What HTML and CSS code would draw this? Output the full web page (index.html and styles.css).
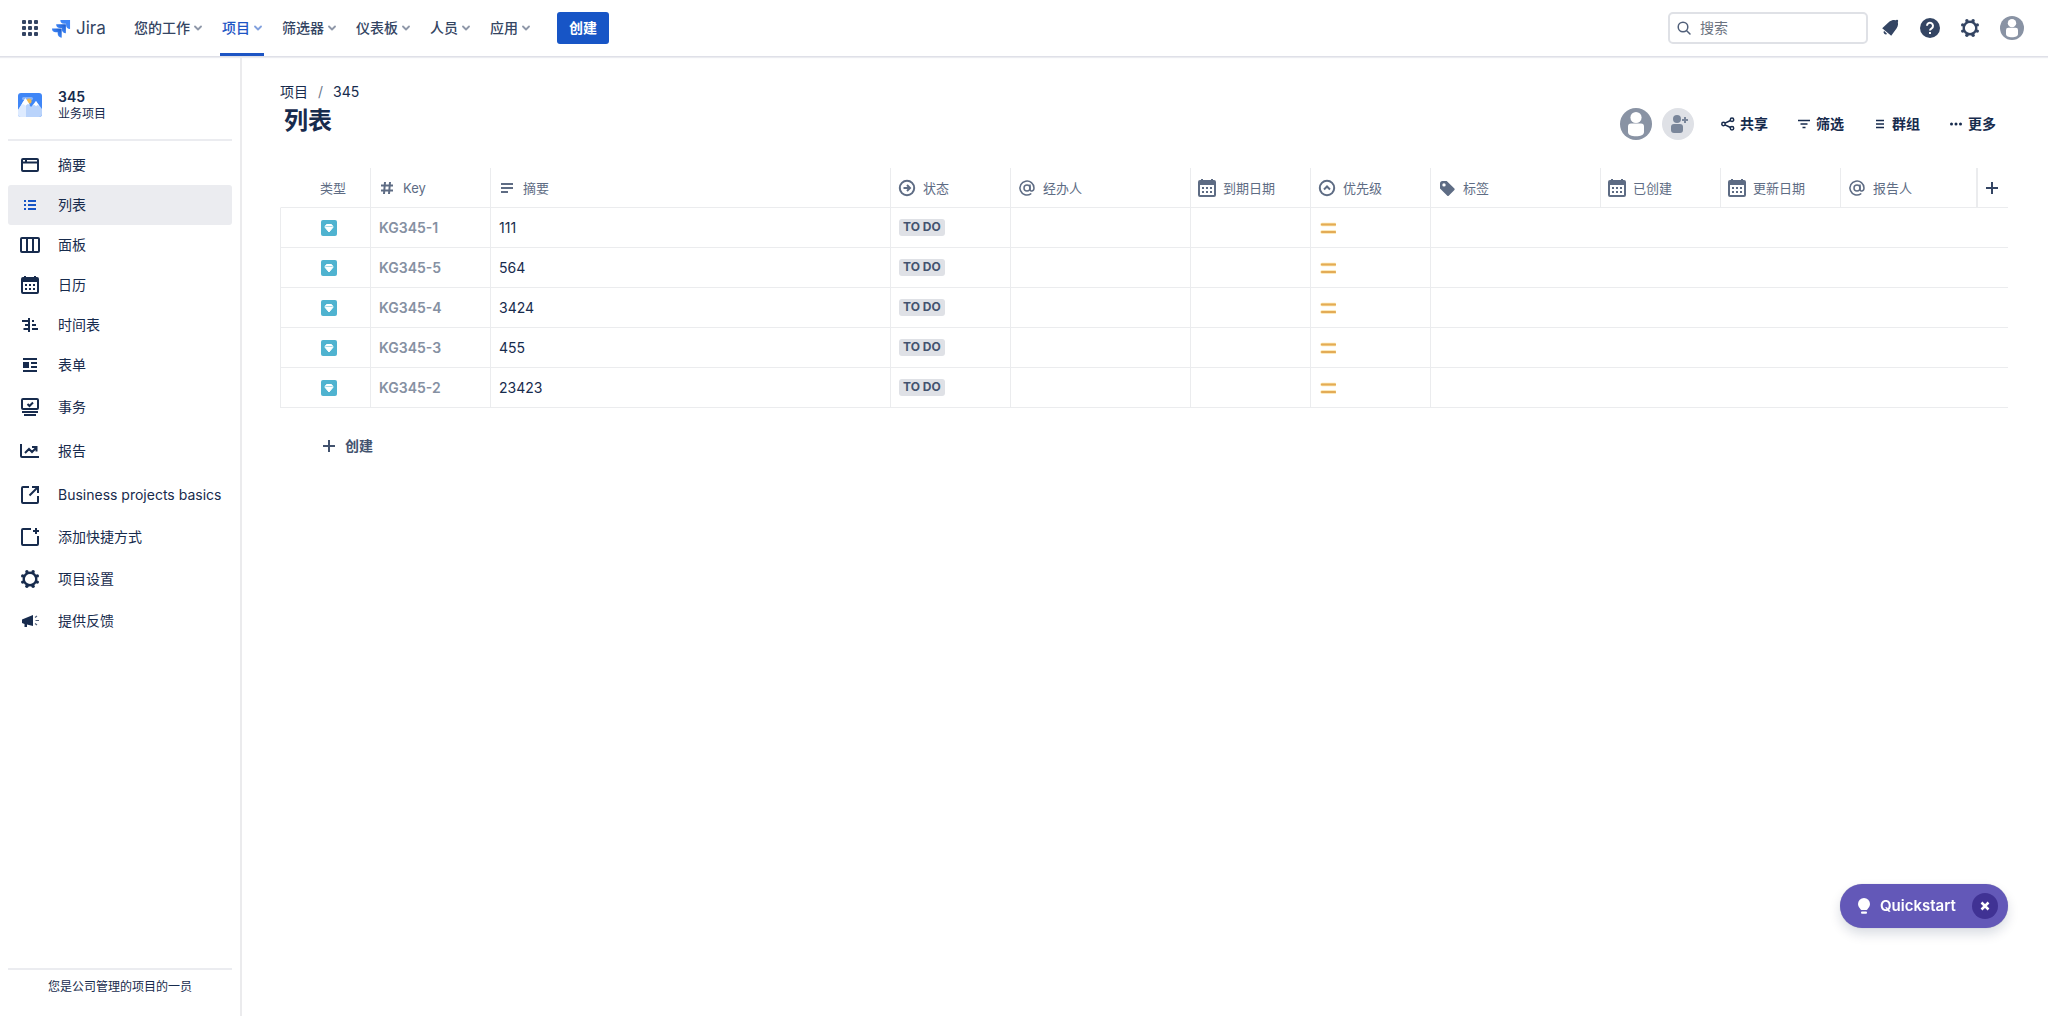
FILE: index.html
```html
<!DOCTYPE html>
<html lang="zh-CN">
<head>
<meta charset="utf-8">
<meta name="viewport" content="width=device-width, initial-scale=1">
<title>列表 - 345 - Jira</title>
<link rel="stylesheet" href="styles.css">
</head>
<body>
<svg class="sprite" aria-hidden="true">
  <symbol id="chevron" viewBox="0 0 8 8"><path d="M1 2.5 4 5.5 7 2.5" fill="none" stroke="currentColor" stroke-width="1.8" stroke-linecap="round" stroke-linejoin="round"/></symbol>
  <symbol id="gear" viewBox="0 0 24 24"><circle cx="12" cy="12" r="6.3" fill="none" stroke="currentColor" stroke-width="2.4"/><g fill="currentColor"><circle cx="15.1" cy="4.7" r="1.7"/><circle cx="19.3" cy="8.9" r="1.7"/><circle cx="19.3" cy="15.1" r="1.7"/><circle cx="15.1" cy="19.3" r="1.7"/><circle cx="8.9" cy="19.3" r="1.7"/><circle cx="4.7" cy="15.1" r="1.7"/><circle cx="4.7" cy="8.9" r="1.7"/><circle cx="8.9" cy="4.7" r="1.7"/></g></symbol>
  <symbol id="calendar" viewBox="0 0 24 24"><path fill="currentColor" fill-rule="evenodd" d="M6 4V3h2v1h8V3h2v1h1a2 2 0 0 1 2 2v13a2 2 0 0 1-2 2H5a2 2 0 0 1-2-2V6a2 2 0 0 1 2-2zM5 9v10h14V9zM7 11h2v2H7zm4 0h2v2h-2zm4 0h2v2h-2zM7 15h2v2H7zm4 0h2v2h-2zm4 0h2v2h-2z"/></symbol>
  <symbol id="at" viewBox="0 0 24 24"><g fill="none" stroke="currentColor" stroke-width="1.5" stroke-linecap="round"><circle cx="12" cy="12" r="3"/><path d="M15 9v4.200c0 2.600 4 2.400 4-1.200a7 7 0 1 0-3.200 5.900"/></g></symbol>
  <symbol id="plus" viewBox="0 0 24 24"><path d="M12 6v12M6 12h12" fill="none" stroke="currentColor" stroke-width="2"/></symbol>
  <symbol id="person" viewBox="0 0 32 32"><circle cx="16" cy="16" r="16" fill="#8993a4"/><circle cx="16" cy="9.500" r="5.600" fill="#fff"/><path d="M8 18.500a3 3 0 0 1 3-3h10a3 3 0 0 1 3 3V24c0 3-3.500 4.300-8 4.300S8 27 8 24z" fill="#fff"/></symbol>
  <symbol id="task" viewBox="0 0 16 16"><rect width="16" height="16" rx="2" fill="#4fb3d0"/><path d="M5.500 4.500h5l1.300 1.800v1.200L8 12 4.200 7.500V6.300z" fill="#fff" stroke="#fff" stroke-linejoin="round"/><path d="M4.500 6.500h7" stroke="#a5dbe8"/></symbol>
  <symbol id="medium" viewBox="0 0 16 16"><path d="M2 4.500h13M2 12h13" stroke="#fbe3a6" stroke-width="3.400" stroke-linecap="round"/><path d="M2 4.500h13M2 12h13" stroke="#e3ab56" stroke-width="2.200" stroke-linecap="round"/></symbol>
</svg>

<header class="topbar">
  <button class="plain" aria-label="切换到"><svg class="i24" viewBox="0 0 24 24" fill="currentColor"><rect x="4" y="4" width="4" height="4" rx="1"/><rect x="10" y="4" width="4" height="4" rx="1"/><rect x="16" y="4" width="4" height="4" rx="1"/><rect x="4" y="10" width="4" height="4" rx="1"/><rect x="10" y="10" width="4" height="4" rx="1"/><rect x="16" y="10" width="4" height="4" rx="1"/><rect x="4" y="16" width="4" height="4" rx="1"/><rect x="10" y="16" width="4" height="4" rx="1"/><rect x="16" y="16" width="4" height="4" rx="1"/></svg></button>
  <a class="logo" href="#"><svg class="mark" viewBox="0 0 20 20"><defs><linearGradient id="lg" x1="1" y1="0" x2="0" y2="1"><stop offset=".1" stop-color="#1e5fd0"/><stop offset=".6" stop-color="#3f86f7"/></linearGradient></defs><path fill="#3f86f7" d="M8.800 1H19v9.600a4 4 0 0 1-4.200-4V5h-2A4 4 0 0 1 8.800 1z"/><path fill="url(#lg)" d="M4.400 5.500H14.600v9.600a4 4 0 0 1-4.200-4V9.500H8.400a4 4 0 0 1-4-4z"/><path fill="url(#lg)" d="M0 10h10.200v9.600a4 4 0 0 1-4.200-4V14H4a4 4 0 0 1-4-4z"/></svg><span>Jira</span></a>
  <nav class="mainnav" aria-label="主导航">
    <button>您的工作<svg><use href="#chevron"/></svg></button>
    <button class="current">项目<svg><use href="#chevron"/></svg></button>
    <button>筛选器<svg><use href="#chevron"/></svg></button>
    <button>仪表板<svg><use href="#chevron"/></svg></button>
    <button>人员<svg><use href="#chevron"/></svg></button>
    <button>应用<svg><use href="#chevron"/></svg></button>
  </nav>
  <button class="create">创建</button>
  <label class="search"><svg viewBox="0 0 16 16" fill="none" stroke="currentColor" stroke-width="1.500" stroke-linecap="round"><circle cx="7" cy="7" r="4.800"/><path d="m10.700 10.700 3.300 3.300"/></svg><input type="search" placeholder="搜索" aria-label="搜索"></label>
  <div class="tools">
    <button class="plain" aria-label="通知"><svg class="i24" viewBox="0 0 24 24" fill="currentColor"><path d="M4.200 12.200 11.500 5.500C13.800 3.700 17 3.400 19.200 4.800 20.600 7 20.300 10.200 18.500 12.500L13.200 19.800z"/><path d="M6 14.800 9.200 18A2.300 2.300 0 0 1 6 14.800z"/><circle cx="19" cy="5" r="1.200"/></svg></button>
    <button class="plain" aria-label="帮助"><svg class="i24" viewBox="0 0 24 24"><circle cx="12" cy="12" r="10" fill="currentColor"/><path d="M9 9.800a3 3 0 1 1 4.600 2.500c-1 .6-1.600 1-1.600 2.200" fill="none" stroke="#fff" stroke-width="2"/><rect x="11" y="16" width="2" height="2" fill="#fff"/></svg></button>
    <button class="plain" aria-label="设置"><svg class="i24"><use href="#gear"/></svg></button>
    <button class="plain" aria-label="个人资料"><svg class="i24"><use href="#person"/></svg></button>
  </div>
</header>

<div class="body">
  <aside class="side">
    <div class="project">
      <svg class="i24" viewBox="0 0 24 24"><defs><clipPath id="pc"><rect width="24" height="24" rx="3"/></clipPath></defs><g clip-path="url(#pc)"><path fill="#3f86f7" d="M0 0h24v24H0z"/><rect x="4" y="4" width="11" height="3" rx="1.500" fill="#85b2fa"/><circle cx="11" cy="8" r="2.600" fill="#f0b84d"/><path fill="#b9d3fb" d="M0 17 7 6l6 8 5-6 6 8v8H0z"/><path fill="#deebff" d="M0 17 7 6l1 1v17H0z"/><path fill="#fff" d="m3.500 11.500 4-6.500 4.500 7-2.200-1-2.300 1.800-1.900-1.500zM15 12.200 18 8l3.200 4.700-1.700-.7-1.500 1.300-1.400-1.200z"/></g></svg>
      <div><strong>345</strong><small>业务项目</small></div>
    </div>
    <nav class="menu" aria-label="项目导航">
      <a href="#"><svg class="i24" viewBox="0 0 24 24" fill="none" stroke="currentColor" stroke-width="2"><rect x="4" y="6" width="16" height="12" rx="1"/><path d="M4 9.500h16M8 6v3"/></svg>摘要</a>
      <a href="#" class="selected" aria-current="page"><svg class="i24" viewBox="0 0 24 24" stroke="currentColor" stroke-width="2"><path d="M6 8h2M10 8h8M6 12h2M10 12h8M6 16h2M10 16h8"/></svg>列表</a>
      <a href="#"><svg class="i24" viewBox="0 0 24 24" fill="none" stroke="currentColor" stroke-width="2"><rect x="3" y="5" width="18" height="14" rx="1"/><path d="M9 5v14M15 5v14"/></svg>面板</a>
      <a href="#"><svg class="i24"><use href="#calendar"/></svg>日历</a>
      <a href="#"><svg class="i24" viewBox="0 0 24 24" fill="none" stroke="currentColor" stroke-width="2"><path d="M11 5v14M4 8h7M7 12h4M5.500 16H11M14 8h2M14 12h4M14 16h6" /></svg>时间表</a>
      <a href="#"><svg class="i24" viewBox="0 0 24 24" fill="none" stroke="currentColor" stroke-width="2"><path d="M5 6h14M5 18h14M13 10h6M13 14h6"/><rect x="6" y="10" width="4" height="4" fill="currentColor"/></svg>表单</a>
      <a href="#" class="tall"><svg class="i24" viewBox="0 0 24 24" fill="none" stroke="currentColor" stroke-width="2"><rect x="4" y="4" width="16" height="10" rx="1"/><path d="m9.500 9 2 2 3.500-3.500M4 17h16M6 20h12" /></svg>事务</a>
      <a href="#" class="tall"><svg class="i24" viewBox="0 0 24 24" fill="none" stroke="currentColor" stroke-width="2"><path d="M3 5v12a1 1 0 0 0 1 1h17M7 14l4-4 3 3 4.500-4.500M14 8h4.500v4.500"/></svg>报告</a>
      <a href="#" class="tall"><svg class="i24" viewBox="0 0 24 24" fill="none" stroke="currentColor" stroke-width="2"><path d="M11 4H5a1 1 0 0 0-1 1v14a1 1 0 0 0 1 1h14a1 1 0 0 0 1-1v-6M11.500 12.500l8-8M14 4h6v6"/></svg>Business projects basics</a>
      <a href="#"><svg class="i24" viewBox="0 0 24 24" fill="none" stroke="currentColor" stroke-width="2"><path d="M13 4H5a1 1 0 0 0-1 1v14a1 1 0 0 0 1 1h14a1 1 0 0 0 1-1v-8M18 3v6M15 6h6"/></svg>添加快捷方式</a>
      <a href="#" class="spaced"><svg class="i24"><use href="#gear"/></svg>项目设置</a>
      <a href="#" class="spaced"><svg class="i24" viewBox="0 0 24 24" fill="currentColor"><path d="M15 6v11l-6-1.500V18H6.500v-3L4 14v-3.500z"/><path d="M17 8.500 19 7M17.500 11.500H21M17 14.500l2 1.500" stroke="currentColor" stroke-width="1.200" opacity=".75"/></svg>提供反馈</a>
    </nav>
    <footer class="note">您是公司管理的项目的一员</footer>
  </aside>

  <main class="main">
    <div class="heading">
      <div>
        <nav class="crumbs" aria-label="面包屑"><a href="#">项目</a><span>/</span><a href="#">345</a></nav>
        <h1>列表</h1>
      </div>
      <div class="actions">
        <button class="plain" aria-label="成员"><svg class="i32"><use href="#person"/></svg></button>
        <button class="plain" aria-label="添加人员"><svg class="i32" viewBox="0 0 32 32"><circle cx="16" cy="16" r="16" fill="#dfe1e6"/><g fill="#7a869a"><circle cx="15" cy="11" r="4"/><rect x="9" y="16" width="12" height="9" rx="3"/></g><path d="M23 9v6M20 12h6" stroke="#7a869a" stroke-width="2"/></svg></button>
        <div class="links">
          <button><svg viewBox="0 0 16 16" fill="none" stroke="currentColor" stroke-width="1.500"><circle cx="3.500" cy="8" r="1.700"/><circle cx="12" cy="3.700" r="1.700"/><circle cx="12" cy="12.300" r="1.700"/><path d="m5 7.200 5.500-2.700M5 8.800l5.500 2.700"/></svg>共享</button>
          <button><svg viewBox="0 0 16 16" stroke="currentColor" stroke-width="1.500"><path d="M2 4.500h12M4.500 8h7M6.500 11.500h3"/></svg>筛选</button>
          <button><svg viewBox="0 0 16 16" stroke="currentColor" stroke-width="1.500"><path d="M4 4.500h8M4 8h8M4 11.500h8"/></svg>群组</button>
          <button><svg viewBox="0 0 16 16" fill="currentColor"><circle cx="3.500" cy="8" r="1.500"/><circle cx="8" cy="8" r="1.500"/><circle cx="12.500" cy="8" r="1.500"/></svg>更多</button>
        </div>
      </div>
    </div>

    <table class="grid">
      <colgroup><col class="w90"><col class="w120"><col><col class="w120"><col class="w180"><col class="w120"><col class="w120"><col class="w170"><col class="w120"><col class="w120"><col class="w136"><col class="w32"></colgroup>
      <thead>
        <tr>
          <th class="type" scope="col">类型</th>
          <th scope="col"><div><svg viewBox="0 0 24 24" fill="none" stroke="currentColor" stroke-width="2"><path d="M10 6 9 18M15 6l-1 12M6 9.500h12M6 14.500h12"/></svg>Key</div></th>
          <th scope="col"><div><svg viewBox="0 0 24 24" fill="none" stroke="currentColor" stroke-width="2"><path d="M6 8h12M6 12h12M6 16h7"/></svg>摘要</div></th>
          <th scope="col"><div><svg viewBox="0 0 24 24" fill="none" stroke="currentColor" stroke-width="2"><circle cx="12" cy="12" r="7.200"/><path d="M8.500 12h6M12 9l3 3-3 3"/></svg>状态</div></th>
          <th scope="col"><div><svg><use href="#at"/></svg>经办人</div></th>
          <th scope="col"><div><svg><use href="#calendar"/></svg>到期日期</div></th>
          <th scope="col"><div><svg viewBox="0 0 24 24" fill="none" stroke="currentColor" stroke-width="2"><circle cx="12" cy="12" r="7.200"/><path d="m9 13.500 3-3 3 3"/></svg>优先级</div></th>
          <th scope="col"><div><svg viewBox="0 0 24 24" fill="currentColor" fill-rule="evenodd"><path d="M5 7.500A2.500 2.500 0 0 1 7.500 5h4.200l7.700 7.600a1 1 0 0 1 0 1.400l-5.700 5.700a1 1 0 0 1-1.400 0L5 12.500zM9 7.200a1.700 1.700 0 1 0 0 3.400 1.700 1.700 0 0 0 0-3.400z"/></svg>标签</div></th>
          <th scope="col"><div><svg><use href="#calendar"/></svg>已创建</div></th>
          <th scope="col"><div><svg><use href="#calendar"/></svg>更新日期</div></th>
          <th scope="col"><div><svg><use href="#at"/></svg>报告人</div></th>
          <th class="add"><button class="plain" aria-label="添加列"><svg class="i24"><use href="#plus"/></svg></button></th>
        </tr>
      </thead>
      <tbody>
        <tr><td class="type"><svg><use href="#task"/></svg></td><td><a href="#">KG345-1</a></td><td>111</td><td><span class="status">TO DO</span></td><td></td><td></td><td class="prio"><svg><use href="#medium"/></svg></td><td></td><td></td><td></td><td></td><td></td></tr>
        <tr><td class="type"><svg><use href="#task"/></svg></td><td><a href="#">KG345-5</a></td><td>564</td><td><span class="status">TO DO</span></td><td></td><td></td><td class="prio"><svg><use href="#medium"/></svg></td><td></td><td></td><td></td><td></td><td></td></tr>
        <tr><td class="type"><svg><use href="#task"/></svg></td><td><a href="#">KG345-4</a></td><td>3424</td><td><span class="status">TO DO</span></td><td></td><td></td><td class="prio"><svg><use href="#medium"/></svg></td><td></td><td></td><td></td><td></td><td></td></tr>
        <tr><td class="type"><svg><use href="#task"/></svg></td><td><a href="#">KG345-3</a></td><td>455</td><td><span class="status">TO DO</span></td><td></td><td></td><td class="prio"><svg><use href="#medium"/></svg></td><td></td><td></td><td></td><td></td><td></td></tr>
        <tr><td class="type"><svg><use href="#task"/></svg></td><td><a href="#">KG345-2</a></td><td>23423</td><td><span class="status">TO DO</span></td><td></td><td></td><td class="prio"><svg><use href="#medium"/></svg></td><td></td><td></td><td></td><td></td><td></td></tr>
      </tbody>
    </table>
    <button class="addrow"><svg class="i24"><use href="#plus"/></svg>创建</button>
  </main>
</div>

<div class="quick">
  <button class="quick-open"><svg viewBox="0 0 12 16" fill="#fff"><path d="M6 0a6 6 0 0 1 6 6c0 2.300-1.400 3.800-2.500 5.200-.3.500-.5.800-1 .8h-5c-.5 0-.7-.3-1-.8C1.400 9.800 0 8.300 0 6a6 6 0 0 1 6-6z"/><rect x="3" y="13.500" width="6" height="2.200" rx="1"/></svg>Quickstart</button>
  <button class="quick-close" aria-label="关闭"><svg viewBox="0 0 12 12"><path d="m2.500 2.500 7 7M9.500 2.500l-7 7" stroke="#fff" stroke-width="2.500"/></svg></button>
</div>
</body>
</html>
```

FILE: styles.css
```css
* { box-sizing: border-box; }

body {
  margin: 0;
  min-height: 100vh;
  display: flex;
  flex-direction: column;
  background: #fff;
  color: #172b4d;
  font: 14px/20px Inter, "Noto Sans CJK SC", sans-serif;
}

button, input { font: inherit; color: inherit; }
button { border: 0; background: none; padding: 0; cursor: pointer; }
a { color: inherit; text-decoration: none; }
svg { display: block; flex: none; }

.sprite { display: none; }
.plain { display: flex; }
.i24 { width: 24px; height: 24px; }
.i32 { width: 32px; height: 32px; }

/* Top navigation */
.topbar {
  display: flex;
  align-items: center;
  height: 56px;
  padding: 0 24px 0 18px;
  color: #344563;
  box-shadow: 0 1px 0 #dfe0e8, 0 2px 1px #ebecf0;
  position: relative;
  font-weight: 500;
}
.logo {
  display: flex;
  align-items: center;
  gap: 5px;
  width: 54px;
  margin-left: 10px;
  font-size: 17px;
  font-weight: 400;
}
.mark { width: 19px; height: 19px; }
.mainnav {
  display: flex;
  align-self: stretch;
  gap: 16px;
  margin-left: 26px;
}
.mainnav button {
  display: flex;
  align-items: center;
  gap: 4px;
  padding: 3px 2px 0;
  border-bottom: 3px solid transparent;
}
.mainnav svg { width: 8px; height: 8px; opacity: .55; }
.mainnav .current { color: #1d55c4; border-color: #1d55c4; }
.create {
  height: 32px;
  margin-left: 25px;
  padding: 0 12px;
  border-radius: 3px;
  background: #1755c6;
  color: #fff;
  font-weight: 600;
}
.search {
  display: flex;
  align-items: center;
  gap: 8px;
  width: 200px;
  height: 32px;
  margin-left: auto;
  padding: 0 6px;
  border: 2px solid #dfe1e6;
  border-radius: 5px;
  color: #505f79;
}
.search svg { width: 16px; height: 16px; }
.search input {
  flex: 1;
  min-width: 0;
  border: 0;
  padding: 0;
  outline: 0;
  background: none;
  font-weight: 400;
}
.search input::placeholder { color: #6b7280; }
.tools { display: flex; gap: 16px; margin-left: 10px; }
.tools button:last-child { margin-left: 2px; }

/* Page body */
.body { display: flex; flex: 1; }
.side {
  display: flex;
  flex-direction: column;
  width: 242px;
  padding: 0 8px;
  border-right: 2px solid #ebebed;
}
.project {
  display: flex;
  align-items: center;
  gap: 16px;
  height: 85px;
  padding: 15px 10px 0;
  border-bottom: 2px solid #ebecf0;
}
.project div { display: flex; flex-direction: column; }
.project strong { line-height: 18px; font-weight: 600; }
.project small { font-size: 12px; line-height: 16px; }
.menu { display: flex; flex-direction: column; padding-top: 4px; }
.menu a {
  display: flex;
  align-items: center;
  gap: 16px;
  height: 40px;
  padding-left: 10px;
  border-radius: 3px;
  line-height: 18px;
}
.menu .tall { height: 44px; }
.menu .spaced { margin-top: 2px; }
.menu .selected { background: #ebecf0; }
.menu .selected svg { color: #1755c6; }
.note {
  margin-top: auto;
  height: 48px;
  padding-top: 7px;
  border-top: 2px solid #ebecf0;
  text-align: center;
  font-size: 12px;
}

.main { flex: 1; min-width: 0; padding: 24px 40px 0 38px; }
.heading {
  display: flex;
  justify-content: space-between;
  height: 88px;
}
.crumbs { display: flex; gap: 10px; padding-top: 2px; }
.crumbs span { color: #6b778c; }
h1 {
  margin: 5px 0 0 4px;
  font-size: 24px;
  line-height: 28px;
  font-weight: 600;
}
.actions { display: flex; align-items: center; gap: 10px; }
.links { display: flex; gap: 4px; margin-left: 4px; }
.links button {
  display: flex;
  align-items: center;
  gap: 4px;
  padding: 0 12px;
  height: 32px;
  font-weight: 600;
}
.links svg { width: 16px; height: 16px; }

/* Issue table */
.grid {
  width: 100%;
  table-layout: fixed;
  border-collapse: separate;
  border-spacing: 0;
}
.w32 { width: 32px; }
.w90 { width: 90px; }
.w120 { width: 120px; }
.w136 { width: 136px; }
.w170 { width: 170px; }
.w180 { width: 180px; }
.grid th, .grid td {
  height: 40px;
  padding: 0 0 0 8px;
  border-left: 1px solid #ebecee;
  border-bottom: 1px solid #ebecee;
  text-align: left;
}
.grid th {
  padding-left: 4px;
  color: #5e6c84;
  font-size: 13px;
  line-height: 18px;
  font-weight: 400;
  white-space: nowrap;
}
.grid th div { display: flex; align-items: center; gap: 4px; }
.grid th div svg { width: 24px; height: 24px; }
.grid .type { padding-left: 40px; }
.grid th.type { padding-left: 39px; border-left-color: transparent; }
.grid th.add { padding-left: 2px; border-left-width: 2px; color: #344563; }
.grid td:nth-child(n+9) { border-left: 0; }
.grid td svg { width: 16px; height: 16px; }
.grid td.prio { padding-left: 9px; }
.grid td a { color: #8590a2; font-weight: 600; }
.status {
  display: block;
  width: max-content;
  padding: 0 4px 1px;
  border-radius: 3px;
  background: #dfe1e6;
  color: #42526e;
  font-size: 12px;
  line-height: 16px;
  font-weight: 700;
}
.addrow {
  display: flex;
  align-items: center;
  gap: 4px;
  height: 32px;
  margin: 22px 0 0 37px;
  color: #42526e;
  font-weight: 600;
}

/* Floating quickstart pill */
.quick {
  position: fixed;
  right: 40px;
  bottom: 88px;
  display: flex;
  align-items: center;
  justify-content: space-between;
  width: 168px;
  height: 44px;
  padding: 0 10px 0 18px;
  border-radius: 22px;
  background: #6358b8;
  color: #fff;
  box-shadow: 0 6px 12px #091e4226, 0 0 1px #091e424f;
}
.quick-open {
  display: flex;
  align-items: center;
  gap: 10px;
  font-size: 15px;
  font-weight: 600;
}
.quick-open svg { width: 12px; height: 16px; }
.quick-close {
  display: grid;
  place-items: center;
  width: 26px;
  height: 26px;
  border-radius: 50%;
  background: #403294;
}
.quick-close svg { width: 12px; height: 12px; }
```
